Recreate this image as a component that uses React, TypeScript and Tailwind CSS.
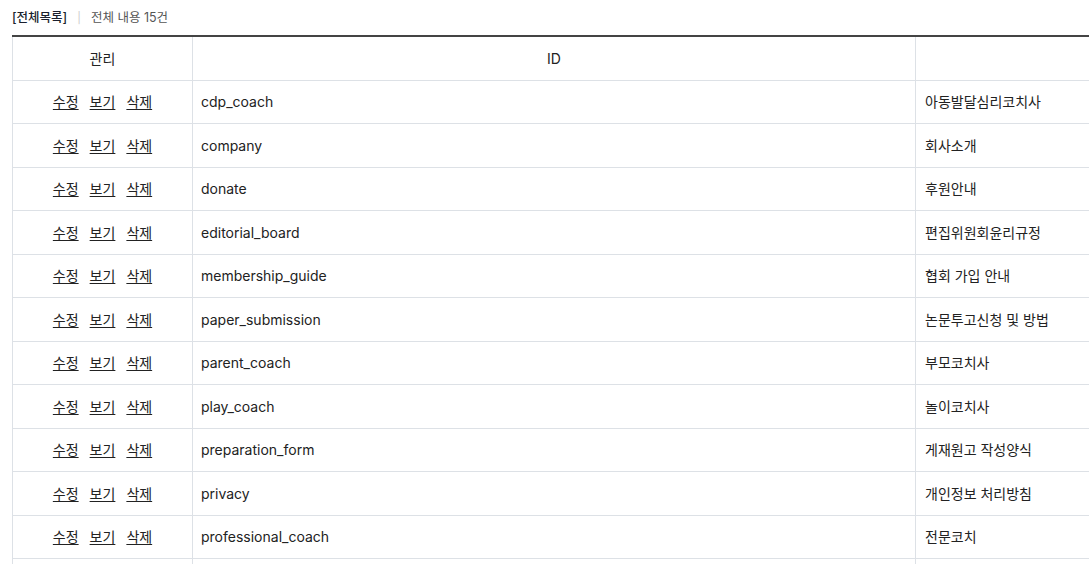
import React from "react";

const rows: [string, string][] = [
  ["cdp_coach", "아동발달심리코치사"],
  ["company", "회사소개"],
  ["donate", "후원안내"],
  ["editorial_board", "편집위원회윤리규정"],
  ["membership_guide", "협회 가입 안내"],
  ["paper_submission", "논문투고신청 및 방법"],
  ["parent_coach", "부모코치사"],
  ["play_coach", "놀이코치사"],
  ["preparation_form", "게재원고 작성양식"],
  ["privacy", "개인정보 처리방침"],
  ["professional_coach", "전문코치"],
  ["provision", "이용약관"],
  ["reviewer_guide", "심사위원 안내"],
  ["sports_coach", "스포츠코치사"],
  ["terms", "회칙"],
];

export default function App() {
  return (
    <div
      className="h-screen w-full overflow-hidden bg-white text-[#222]"
      style={{ fontFamily: '"Inter", "Noto Sans CJK KR", sans-serif' }}
    >
      <div className="pl-[12px]">
        <div className="flex items-center h-[35px] pt-[2px] text-[12.5px]">
          <span className="text-[#1a1f2e] font-medium">[전체목록]</span>
          <span className="mx-[10px] text-[#ccc] text-[11px]">|</span>
          <span className="text-[#555]">전체 내용 15건</span>
        </div>
        <table className="border-collapse w-[1300px] text-[14px] border-t-2 border-t-[#444] table-fixed">
          <colgroup>
            <col className="w-[180px]" />
            <col className="w-[723px]" />
            <col />
          </colgroup>
          <thead>
            <tr className="h-[44px]">
              <th className="font-normal border border-[#dde1e6] border-t-0 text-center">관리</th>
              <th className="font-normal border border-[#dde1e6] border-t-0 text-center">ID</th>
              <th className="font-normal border border-[#dde1e6] border-t-0"></th>
            </tr>
          </thead>
          <tbody>
            {rows.map(([id, name]) => (
              <tr key={id} className="h-[43.5px]">
                <td className="border border-[#dde1e6] text-center p-0">
                  <div className="flex justify-center gap-[11px]">
                    <a href="#" className="underline underline-offset-2 text-[#222]">수정</a>
                    <a href="#" className="underline underline-offset-2 text-[#222]">보기</a>
                    <a href="#" className="underline underline-offset-2 text-[#222]">삭제</a>
                  </div>
                </td>
                <td className="border border-[#dde1e6] pl-[8px]">{id}</td>
                <td className="border border-[#dde1e6] pl-[9px]">{name}</td>
              </tr>
            ))}
          </tbody>
        </table>
      </div>
    </div>
  );
}
